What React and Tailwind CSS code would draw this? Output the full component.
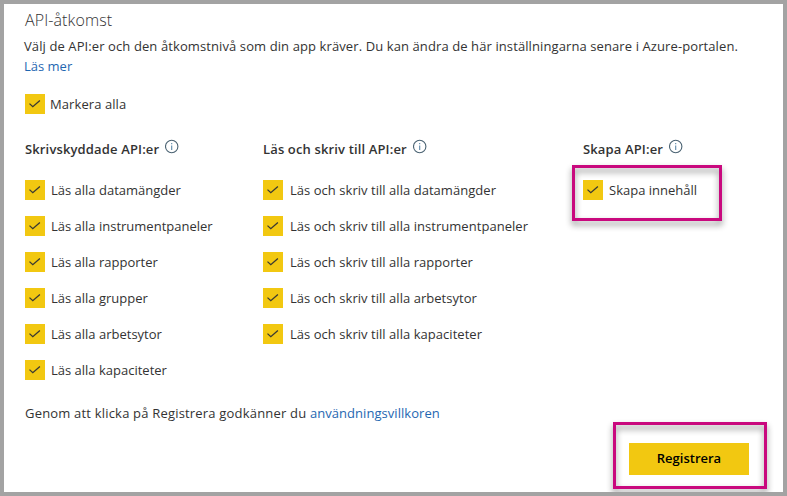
const readApis = [
  "Läs alla datamängder",
  "Läs alla instrumentpaneler",
  "Läs alla rapporter",
  "Läs alla grupper",
  "Läs alla arbetsytor",
  "Läs alla kapaciteter",
];
const writeApis = [
  "Läs och skriv till alla datamängder",
  "Läs och skriv till alla instrumentpaneler",
  "Läs och skriv till alla rapporter",
  "Läs och skriv till alla arbetsytor",
  "Läs och skriv till alla kapaciteter",
];

function CheckRow({ label, className = "gap-1.5" }) {
  return (
    <label className={`flex h-5 items-center whitespace-nowrap ${className}`}>
      <span className="h-5 w-5 shrink-0 bg-[#f2c811]">
        <svg viewBox="0 0 20 20" className="h-5 w-5" fill="none" stroke="#3a3a33" strokeWidth="1.3">
          <path d="M4.5 9.6 7.8 12.7 14.9 6.4" />
        </svg>
      </span>
      <span>{label}</span>
    </label>
  );
}

function InfoIcon() {
  return (
    <svg viewBox="0 0 14 15" className="mt-[3px] h-[15px] w-3.5 shrink-0" fill="none">
      <circle cx="6.7" cy="7.5" r="6.2" stroke="#4a6272" strokeWidth="1.1" />
      <path d="M6.7 6.5v4.5M6.7 4v1.3" stroke="#5c87a8" strokeWidth="1.1" />
    </svg>
  );
}

function Column({ title, items, className, rowClass }) {
  return (
    <section className={className}>
      <h2 className="flex h-6 gap-1.5 whitespace-nowrap font-semibold tracking-[0.14px]">
        <span className="pt-[3px] leading-5">{title}</span>
        <InfoIcon />
      </h2>
      <div className="mt-5 flex flex-col gap-4">
        {items.map((item) => (
          <CheckRow key={item} label={item} className={rowClass} />
        ))}
      </div>
    </section>
  );
}

export default function App() {
  return (
    <main className="relative h-[496px] w-[787px] overflow-hidden border-4 border-[#a3a3a3] bg-white pl-[21px] font-['Open_Sans','Noto_Sans',sans-serif] text-[13px] leading-5 text-[#333333]">
      <h1 className="pt-1 text-base font-light leading-6 tracking-[0.1px]">API-åtkomst</h1>
      <p className="mt-1 -ml-px whitespace-nowrap tracking-[0.1px]">
        Välj de API:er och den åtkomstnivå som din app kräver. Du kan ändra de här inställningarna senare i Azure-portalen.
        <br />
        <a className="tracking-normal text-[#1f67b1]">Läs mer</a>
      </p>
      <div className="mt-[18px]">
        <CheckRow label="Markera alla" className="gap-[5px] tracking-[0.08px]" />
      </div>
      <div className="mt-[22px] flex">
        <Column title="Skrivskyddade API:er" items={readApis} className="w-[238px]" />
        <Column title="Läs och skriv till API:er" items={writeApis} className="w-80" rowClass="gap-[7px] tracking-[0.04px]" />
        <Column title="Skapa API:er" items={["Skapa innehåll"]} className="w-40" />
      </div>
      <p className="mt-[23px] tracking-[0.19px]">
        Genom att klicka på Registrera godkänner du{" "}
        <a className="tracking-[0.05px] text-[#1f67b1]">användningsvillkoren</a>
      </p>
      <div className="mt-5 flex justify-end pr-[34px]">
        <button className="h-8 w-[120px] bg-[#f2c811] pb-0.5 font-semibold text-black">Registrera</button>
      </div>
      <div className="absolute left-[568px] top-[161px] h-14 w-[150px] border-3 border-[#c9097e] drop-shadow-[0_4px_3px_rgba(0,0,0,0.45)]" />
      <div className="absolute left-[609px] top-[418px] h-[67px] w-[154px] border-3 border-[#c9097e] drop-shadow-[0_4px_3px_rgba(0,0,0,0.45)]" />
    </main>
  );
}
